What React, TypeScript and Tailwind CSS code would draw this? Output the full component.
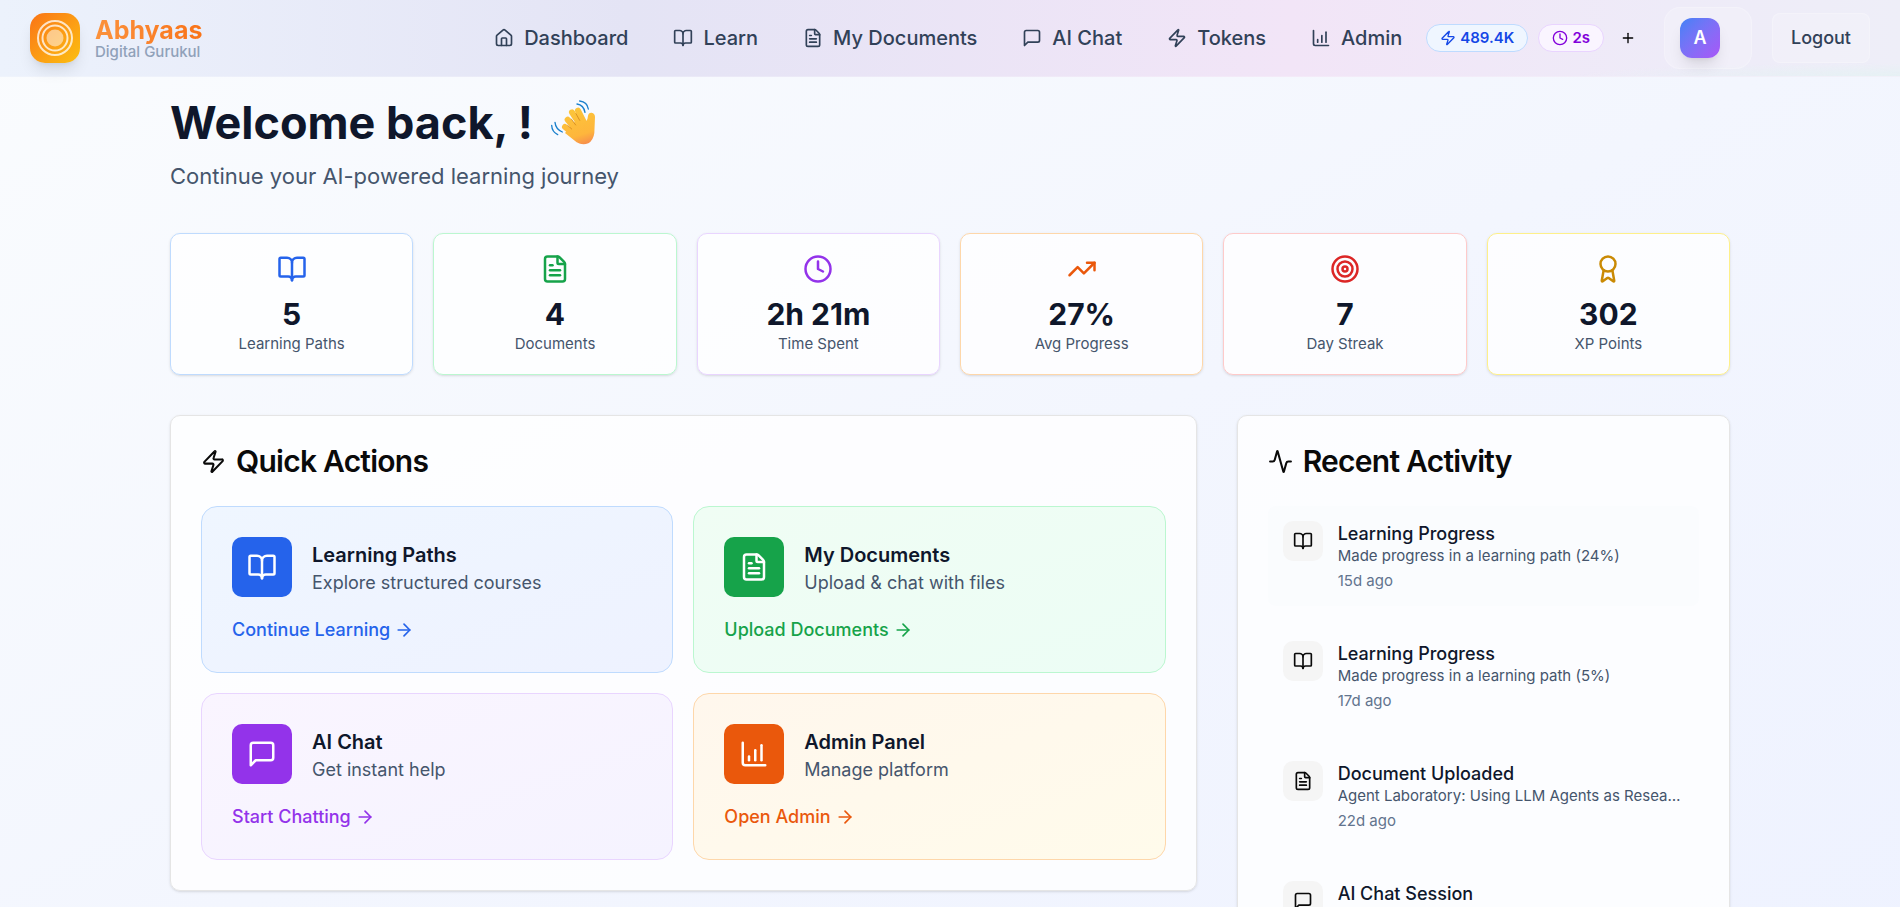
import type { LucideIcon } from "lucide-react";
import {
    Activity,
    ArrowRight,
    Award,
    BookOpen,
    Clock,
    FileText,
    Plus,
    Target,
    TrendingUp,
    Zap,
} from "lucide-react";

type IconProps = { className?: string };

const HouseIcon = ({ className }: IconProps) => (
    <svg className={className} viewBox="0 0 24 24" fill="none" stroke="currentColor" strokeWidth="2" strokeLinecap="round" strokeLinejoin="round">
        <path d="M15 21v-8a1 1 0 0 0-1-1h-4a1 1 0 0 0-1 1v8" />
        <path d="M3 10a2 2 0 0 1 .709-1.528l7-6a2 2 0 0 1 2.582 0l7 6A2 2 0 0 1 21 10v9a2 2 0 0 1-2 2H5a2 2 0 0 1-2-2z" />
    </svg>
);

const ChartIcon = ({ className }: IconProps) => (
    <svg className={className} viewBox="0 0 24 24" fill="none" stroke="currentColor" strokeWidth="2" strokeLinecap="round" strokeLinejoin="round">
        <path d="M3 3v16a2 2 0 0 0 2 2h16" />
        <path d="M13 17V9" />
        <path d="M18 17V5" />
        <path d="M8 17v-3" />
    </svg>
);

const ChatIcon = ({ className }: IconProps) => (
    <svg className={className} viewBox="0 0 24 24" fill="none" stroke="currentColor" strokeWidth="2" strokeLinecap="round" strokeLinejoin="round">
        <path d="M21 15a2 2 0 0 1-2 2H7l-4 4V5a2 2 0 0 1 2-2h14a2 2 0 0 1 2 2z" />
    </svg>
);

const WavingHand = ({ className }: IconProps) => (
    <svg className={className} viewBox="30 25 150 150" fill="none" strokeLinecap="round" role="img" aria-label="Waving hand">
        <defs>
            <linearGradient id="skin" gradientUnits="userSpaceOnUse" x1="100" y1="60" x2="135" y2="168">
                <stop offset="0" stopColor="#fcc53a" />
                <stop offset="0.7" stopColor="#feb63c" />
                <stop offset="1" stopColor="#f68a4e" />
            </linearGradient>
        </defs>
        {/* palm and thumb */}
        <path
            d="M112 92 L142 94 Q146 90 147 78 Q149 68 158 69 Q168 71 168 82 L166 130 Q163 152 148 161 Q130 168 113 158 L78 130 Z"
            fill="url(#skin)"
        />
        {/* fingers, little finger first */}
        <g stroke="url(#skin)" strokeWidth="18">
            <path d="M78 112 L120 146" />
            <path d="M86 90 L126 136" />
            <path d="M99 68 L134 122" />
            <path d="M117 63 L142 112" />
        </g>
        <g stroke="#cf8118" strokeWidth="3" strokeOpacity="0.75">
            <path d="M86 107 L98 118" />
            <path d="M97 88 L110 106" />
            <path d="M111 72 L122 92" />
        </g>
        <g stroke="#1b80cc" strokeWidth="4">
            <path d="M122 34 Q145 37 148 58" />
            <path d="M114 43 Q134 46 138 68" />
            <path d="M38 107 Q39 127 56 135" />
            <path d="M48 98 Q50 118 70 127" />
        </g>
    </svg>
);

type AnyIcon = LucideIcon | typeof HouseIcon;

const navItems: { label: string; icon: AnyIcon }[] = [
    { label: "Dashboard", icon: HouseIcon },
    { label: "Learn", icon: BookOpen },
    { label: "My Documents", icon: FileText },
    { label: "AI Chat", icon: ChatIcon },
    { label: "Tokens", icon: Zap },
    { label: "Admin", icon: ChartIcon },
];

const stats: { value: string; label: string; icon: AnyIcon; border: string; color: string }[] = [
    { value: "5", label: "Learning Paths", icon: BookOpen, border: "border-[#bfdbfe]", color: "text-[#2563eb]" },
    { value: "4", label: "Documents", icon: FileText, border: "border-[#bbf7d0]", color: "text-[#16a34a]" },
    { value: "2h 21m", label: "Time Spent", icon: Clock, border: "border-[#e9d5ff]", color: "text-[#9333ea]" },
    { value: "27%", label: "Avg Progress", icon: TrendingUp, border: "border-[#fed7aa]", color: "text-[#ea580c]" },
    { value: "7", label: "Day Streak", icon: Target, border: "border-[#fecaca]", color: "text-[#dc2626]" },
    { value: "302", label: "XP Points", icon: Award, border: "border-[#fef08a]", color: "text-[#ca8a04]" },
];

const actions: { title: string; text: string; link: string; icon: AnyIcon; card: string; tile: string; color: string }[] = [
    {
        title: "Learning Paths",
        text: "Explore structured courses",
        link: "Continue Learning",
        icon: BookOpen,
        card: "border-[#bfdbfe] from-[#eff6ff] to-[#eef2ff]",
        tile: "bg-[#2563eb]",
        color: "text-[#2563eb]",
    },
    {
        title: "My Documents",
        text: "Upload & chat with files",
        link: "Upload Documents",
        icon: FileText,
        card: "border-[#bbf7d0] from-[#f0fdf4] to-[#ecfdf5]",
        tile: "bg-[#16a34a]",
        color: "text-[#16a34a]",
    },
    {
        title: "AI Chat",
        text: "Get instant help",
        link: "Start Chatting",
        icon: ChatIcon,
        card: "border-[#e9d5ff] from-[#faf5ff] to-[#f5f3ff]",
        tile: "bg-[#9333ea]",
        color: "text-[#9333ea]",
    },
    {
        title: "Admin Panel",
        text: "Manage platform",
        link: "Open Admin",
        icon: ChartIcon,
        card: "border-[#fed7aa] from-[#fff7ed] to-[#fffbeb]",
        tile: "bg-[#ea580c]",
        color: "text-[#ea580c]",
    },
];

const activities: { title: string; text: string; time: string; icon: AnyIcon }[] = [
    { title: "Learning Progress", text: "Made progress in a learning path (24%)", time: "15d ago", icon: BookOpen },
    { title: "Learning Progress", text: "Made progress in a learning path (5%)", time: "17d ago", icon: BookOpen },
    { title: "Document Uploaded", text: "Agent Laboratory: Using LLM Agents as Research Assistants", time: "22d ago", icon: FileText },
    { title: "AI Chat Session", text: "Started a new chat session", time: "22d ago", icon: ChatIcon },
];

const Header = () => (
    <header className="flex h-[77px] items-center justify-between border-b border-white/20 bg-[radial-gradient(ellipse_at_bottom_right,#e6f1f4_0%,transparent_12%),linear-gradient(90deg,#ecf2fc_0%,#e4e4f5_33%,#f2e5f7_68%,#eeebf8_88%,#eeeef8_100%)] px-[30px]">
        <a href="#" className="flex items-center gap-[15px]">
            <span className="flex size-[50px] items-center justify-center rounded-[15px] bg-linear-to-br from-[#f97316] to-[#fbbf10] shadow-lg">
                <svg className="size-9" viewBox="0 0 36 36" fill="none" stroke="#fff" strokeOpacity="0.75">
                    <circle cx="18" cy="18" r="17" strokeWidth="2" />
                    <circle cx="18" cy="18" r="12.5" strokeWidth="2" />
                    <circle cx="18" cy="18" r="8.5" fill="#fff" fillOpacity="0.5" stroke="none" />
                </svg>
            </span>
            <span className="flex flex-col">
                <span className="bg-linear-to-r from-[#fb923c] to-[#f97316] bg-clip-text text-[25px] leading-7 font-bold text-transparent">Abhyaas</span>
                <span className="text-[15px] leading-4 font-medium text-slate-400">Digital Gurukul</span>
            </span>
        </a>
        <div className="flex items-center">
            <nav className="flex items-center gap-[45px]">
                {navItems.map(({ label, icon: Icon }) => (
                    <a key={label} href="#" className="flex items-center gap-[10px] text-xl font-medium text-slate-700">
                        <Icon className="size-5" />
                        {label}
                    </a>
                ))}
            </nav>
            <div className="ml-6 flex items-center gap-[10px]">
                <span className="flex h-7 items-center gap-1 rounded-full border border-blue-200 bg-blue-50 px-[13px] text-[15px] font-semibold text-blue-700">
                    <Zap className="size-4" />
                    489.4K
                </span>
                <span className="flex h-7 items-center gap-1 rounded-full border border-purple-200 bg-purple-50 px-[13px] text-[15px] font-semibold text-purple-700">
                    <Clock className="size-4" />
                    2s
                </span>
                <button aria-label="Add tokens" className="flex size-7 items-center justify-center text-black">
                    <Plus className="size-4" />
                </button>
            </div>
            <button className="ml-[22px] flex h-[62px] w-[88px] items-center rounded-2xl border border-white/20 bg-white/20 pl-[15px]">
                <span className="flex size-10 items-center justify-center rounded-xl bg-linear-to-br from-[#3b82f6] to-[#a855f7] text-lg font-semibold text-white shadow-lg">A</span>
            </button>
            <button className="ml-5 h-[50px] rounded-lg border border-white/20 bg-white/20 px-[18px] text-lg font-medium text-slate-700">Logout</button>
        </div>
    </header>
);

const App = () => {
    return (
        <div className="min-h-screen bg-linear-to-br from-[#fafcfe] via-[#f3f6fe] to-[#eef2ff] font-['Inter',sans-serif]">
            <Header />
            <main className="mx-auto max-w-[1600px] px-5 pt-[21px] pb-10">
                <h1 className="flex items-center gap-4 text-[45px] leading-[50px] font-bold text-slate-900">
                    Welcome back, !
                    <WavingHand className="size-[50px]" />
                </h1>
                <p className="mt-3 text-[22px] leading-8 text-slate-600">Continue your AI-powered learning journey</p>

                <section className="mt-[41px] grid grid-cols-6 gap-5">
                    {stats.map(({ value, label, icon: Icon, border, color }) => (
                        <div key={label} className={`flex flex-col items-center rounded-[10px] border bg-white/80 px-5 py-5 shadow-sm ${border}`}>
                            <Icon className={`size-[30px] ${color}`} />
                            <p className="mt-[10px] text-[30px] leading-10 font-bold text-slate-900">{value}</p>
                            <p className="text-[15px] leading-5 text-slate-600">{label}</p>
                        </div>
                    ))}
                </section>

                <div className="mt-10 grid grid-cols-3 items-start gap-10">
                    <section className="col-span-2 rounded-[10px] border border-neutral-200 bg-white/80 p-[30px] shadow-sm">
                        <h2 className="flex items-center gap-[10px] text-[30px] leading-[30px] font-semibold tracking-tight text-neutral-950">
                            <Zap className="size-[25px]" />
                            Quick Actions
                        </h2>
                        <div className="mt-[30px] grid grid-cols-2 gap-5">
                            {actions.map(({ title, text, link, icon: Icon, card, tile, color }) => (
                                <div key={title} className={`rounded-2xl border bg-linear-to-br p-[30px] ${card}`}>
                                    <div className="flex items-center gap-5">
                                        <span className={`flex size-[60px] items-center justify-center rounded-[10px] text-white ${tile}`}>
                                            <Icon className="size-[30px]" />
                                        </span>
                                        <div>
                                            <h3 className="text-xl leading-[30px] font-semibold text-slate-900">{title}</h3>
                                            <p className="text-lg leading-[25px] text-slate-600">{text}</p>
                                        </div>
                                    </div>
                                    <a href="#" className={`mt-5 flex items-center gap-1 text-lg leading-[25px] font-medium ${color}`}>
                                        {link}
                                        <ArrowRight className="size-5" />
                                    </a>
                                </div>
                            ))}
                        </div>
                    </section>

                    <section className="rounded-[10px] border border-neutral-200 bg-white/80 p-[30px] shadow-sm">
                        <h2 className="flex items-center gap-[10px] text-[30px] leading-[30px] font-semibold tracking-tight text-neutral-950">
                            <Activity className="size-[25px]" />
                            Recent Activity
                        </h2>
                        <ul className="mt-[30px] flex flex-col gap-5">
                            {activities.map(({ title, text, time, icon: Icon }, i) => (
                                <li key={i} className={`flex items-start gap-[15px] rounded-lg p-[15px] ${i === 0 ? "bg-slate-50/40" : ""}`}>
                                    <span className="flex size-10 shrink-0 items-center justify-center rounded-[10px] bg-neutral-100 text-neutral-950">
                                        <Icon className="size-5" />
                                    </span>
                                    <div className="min-w-0">
                                        <p className="text-lg leading-[25px] font-medium text-slate-900">{title}</p>
                                        <p className="truncate text-[15px] leading-5 text-slate-600">{text}</p>
                                        <p className="mt-[5px] text-[15px] leading-5 text-slate-500">{time}</p>
                                    </div>
                                </li>
                            ))}
                        </ul>
                    </section>
                </div>
            </main>
        </div>
    );
};

export default App;
